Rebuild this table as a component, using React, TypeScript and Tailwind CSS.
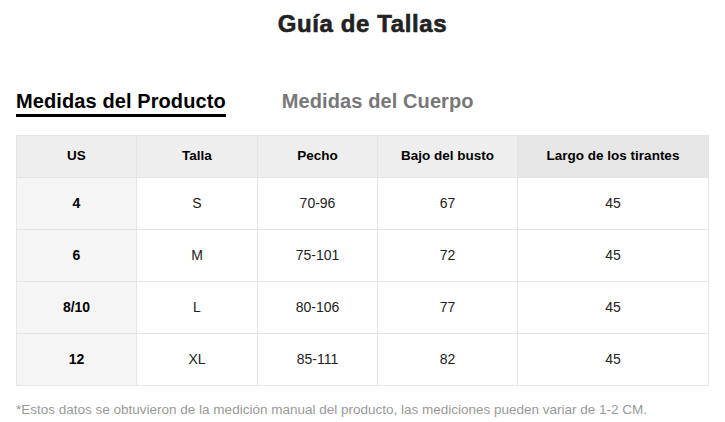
const columns = ['US', 'Talla', 'Pecho', 'Bajo del busto', 'Largo de los tirantes'];

const rows = [
  ['4', 'S', '70-96', '67', '45'],
  ['6', 'M', '75-101', '72', '45'],
  ['8/10', 'L', '80-106', '77', '45'],
  ['12', 'XL', '85-111', '82', '45'],
];

const widths = ['w-[120px]', 'w-[121px]', 'w-[120px]', 'w-[140px]', ''];

export default function App() {
  return (
    <div className="w-[725px] h-[422px] bg-white px-4 font-['Liberation_Sans',Arial,sans-serif] text-[#222]">
      <h1 className="pt-[9px] text-center text-[24px] font-bold leading-[30px] tracking-[0.6px] text-[#222] [-webkit-text-stroke:0.6px_#222]">
        Guía de Tallas
      </h1>

      {/* tabs */}
      <div className="mt-[50px] flex gap-[56px]">
        <div className="border-b-[3px] border-black pb-[1px] text-[20px] font-bold leading-[24px] tracking-[0.1px] text-black">
          Medidas del Producto
        </div>
        <div className="text-[20px] font-bold leading-[24px] tracking-[0.1px] text-[#777]">Medidas del Cuerpo</div>
      </div>

      <table className="mt-[18px] w-[693px] table-fixed border-collapse text-[14px]">
        <thead>
          <tr className="h-[42px]">
            {columns.map((c, i) => (
              <th
                key={c}
                className={`${widths[i]} border border-[#e5e5e5] text-[13.5px] font-bold text-black ${
                  i === 4 ? 'bg-[#e6e6e6]' : 'bg-[#eeeeee]'
                }`}
              >
                {c}
              </th>
            ))}
          </tr>
        </thead>
        <tbody>
          {rows.map((r) => (
            <tr key={r[0]} className="h-[52px]">
              {r.map((v, i) => (
                <td
                  key={i}
                  className={`border border-[#e5e5e5] text-center ${
                    i === 0 ? 'bg-[#f5f5f5] font-bold text-black' : 'text-[#222]'
                  }`}
                >
                  {v}
                </td>
              ))}
            </tr>
          ))}
        </tbody>
      </table>

      <p className="mt-[14px] text-[13.5px] text-[#999]">
        *Estos datos se obtuvieron de la medición manual del producto, las mediciones pueden variar de 1-2 CM.
      </p>
    </div>
  );
}
